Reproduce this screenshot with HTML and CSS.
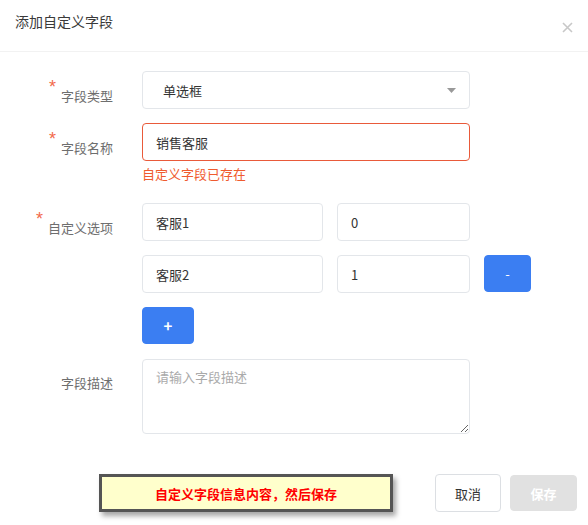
FILE: index.html
```html
<!DOCTYPE html>
<html lang="zh-CN">
<head>
<meta charset="utf-8">
<title>添加自定义字段</title>
<link rel="stylesheet" href="styles.css">
</head>
<body>
<div class="dialog">
  <div class="header">
    <span class="title">添加自定义字段</span>
    <span class="close" aria-label="关闭">
      <svg width="11" height="11" viewBox="0 0 11 11"><path d="M1 1L10 10M10 1L1 10" stroke="#c8c8c8" stroke-width="1.6" fill="none"/></svg>
    </span>
  </div>
  <div class="body">
    <div class="row r1">
      <div class="label"><span class="star">*</span>字段类型</div>
      <div class="field">
        <div class="select">
          <span>单选框</span>
          <svg class="caret" width="9" height="5" viewBox="0 0 9 5"><path d="M0 0H9L4.5 5Z" fill="#999"/></svg>
        </div>
      </div>
    </div>
    <div class="row r2">
      <div class="label"><span class="star">*</span>字段名称</div>
      <div class="field">
        <input class="input full error" value="销售客服">
        <div class="errmsg">自定义字段已存在</div>
      </div>
    </div>
    <div class="row r3">
      <div class="label"><span class="star">*</span>自定义选项</div>
      <div class="field">
        <div class="opt">
          <input class="input name" value="客服1">
          <input class="input val" value="0">
        </div>
        <div class="opt">
          <input class="input name" value="客服2">
          <input class="input val" value="1">
          <button class="btn blue minus">-</button>
        </div>
        <button class="btn blue plus">+</button>
      </div>
    </div>
    <div class="row r4">
      <div class="label">字段描述</div>
      <div class="field">
        <textarea class="textarea" placeholder="请输入字段描述"></textarea>
      </div>
    </div>
  </div>
  <div class="footer">
    <button class="btn cancel">取消</button>
    <button class="btn save">保存</button>
  </div>
  <div class="note">自定义字段信息内容，然后保存</div>
</div>
</body>
</html>
```
FILE: styles.css
```css
* { box-sizing: border-box; }
html, body { margin: 0; padding: 0; background: #fff; }
body {
  font-family: "Noto Sans CJK SC", "Noto Sans", "Liberation Sans", sans-serif;
  font-size: 13px;
  color: #333;
}
.dialog { position: relative; width: 588px; height: 525px; }
.header {
  height: 52px;
  border-bottom: 1px solid #f2f2f2;
  display: flex;
  align-items: flex-start;
  justify-content: space-between;
  padding: 10px 15px 0 15px;
}
.title { font-size: 14px; color: #3a3a3a; line-height: 22px; }
.close { margin-top: 12px; display: flex; }
.body { padding-top: 19px; }
.row { display: flex; }
.label {
  width: 142px;
  padding-right: 29px;
  text-align: right;
  color: #6e6e6e;
  font-size: 13px;
  line-height: 18px;
  padding-top: 15px;
  white-space: nowrap;
}
.star {
  color: #f26a4b;
  font-size: 18px;
  font-family: "Liberation Sans", sans-serif;
  position: relative;
  top: -8px;
  margin-right: 5px;
}
.field { display: flex; flex-direction: column; }
.select, .input, .textarea {
  border: 1px solid #e3e6ea;
  border-radius: 4px;
  background: #fff;
  font-family: inherit;
  font-size: 13px;
  color: #333;
  outline: none;
}
.select {
  width: 328px; height: 38px;
  display: flex; align-items: center; justify-content: space-between;
  padding: 0 13px 0 20px;
}
.input { height: 38px; padding: 0 13px; margin: 0; }
.input.full { width: 328px; }
.input.error { border-color: #e95a3a; }
.errmsg { color: #ef5b2f; font-size: 13px; line-height: 18px; margin-top: 4px; }
.r2 { margin-top: 14px; }
.r3 { margin-top: 20px; }
.opt { display: flex; gap: 14px; margin-bottom: 14px; }
.input.name { width: 181px; }
.input.val { width: 133px; }
.btn {
  font-family: inherit;
  font-size: 13px;
  border-radius: 4px;
  border: 1px solid transparent;
  cursor: pointer;
  padding: 0;
}
.btn.blue { background: #3b7ef2; color: #fff; border-color: #3b7ef2; }
.minus { width: 47px; height: 37px; }
.plus { width: 52px; height: 37px; font-size: 15px; font-weight: bold; }
.r4 { margin-top: 15px; }
.r4 .label { padding-top: 15px; }
.textarea {
  width: 328px; height: 75px;
  padding: 7px 13px;
  resize: vertical;
  margin: 0;
  display: block;
}
.textarea::placeholder { color: #aaa; }
.footer {
  display: flex;
  justify-content: flex-end;
  gap: 9px;
  padding: 40px 11px 0 0;
}
.cancel {
  width: 66px; height: 38px;
  background: #fff; border-color: #dcdfe3; color: #333;
}
.save {
  width: 67px; height: 36px; margin-top: 1px;
  background: #e1e1e1; color: #fff; font-weight: bold; border-color: #e1e1e1;
}
.note {
  position: absolute;
  left: 99px; top: 474px;
  width: 294px; height: 38px;
  background: #ffffcc;
  border: 3px solid #555;
  box-shadow: 3px 4px 5px rgba(0,0,0,0.35);
  color: #f00;
  font-weight: bold;
  font-size: 13px;
  display: flex; align-items: center; justify-content: center;
}
```
